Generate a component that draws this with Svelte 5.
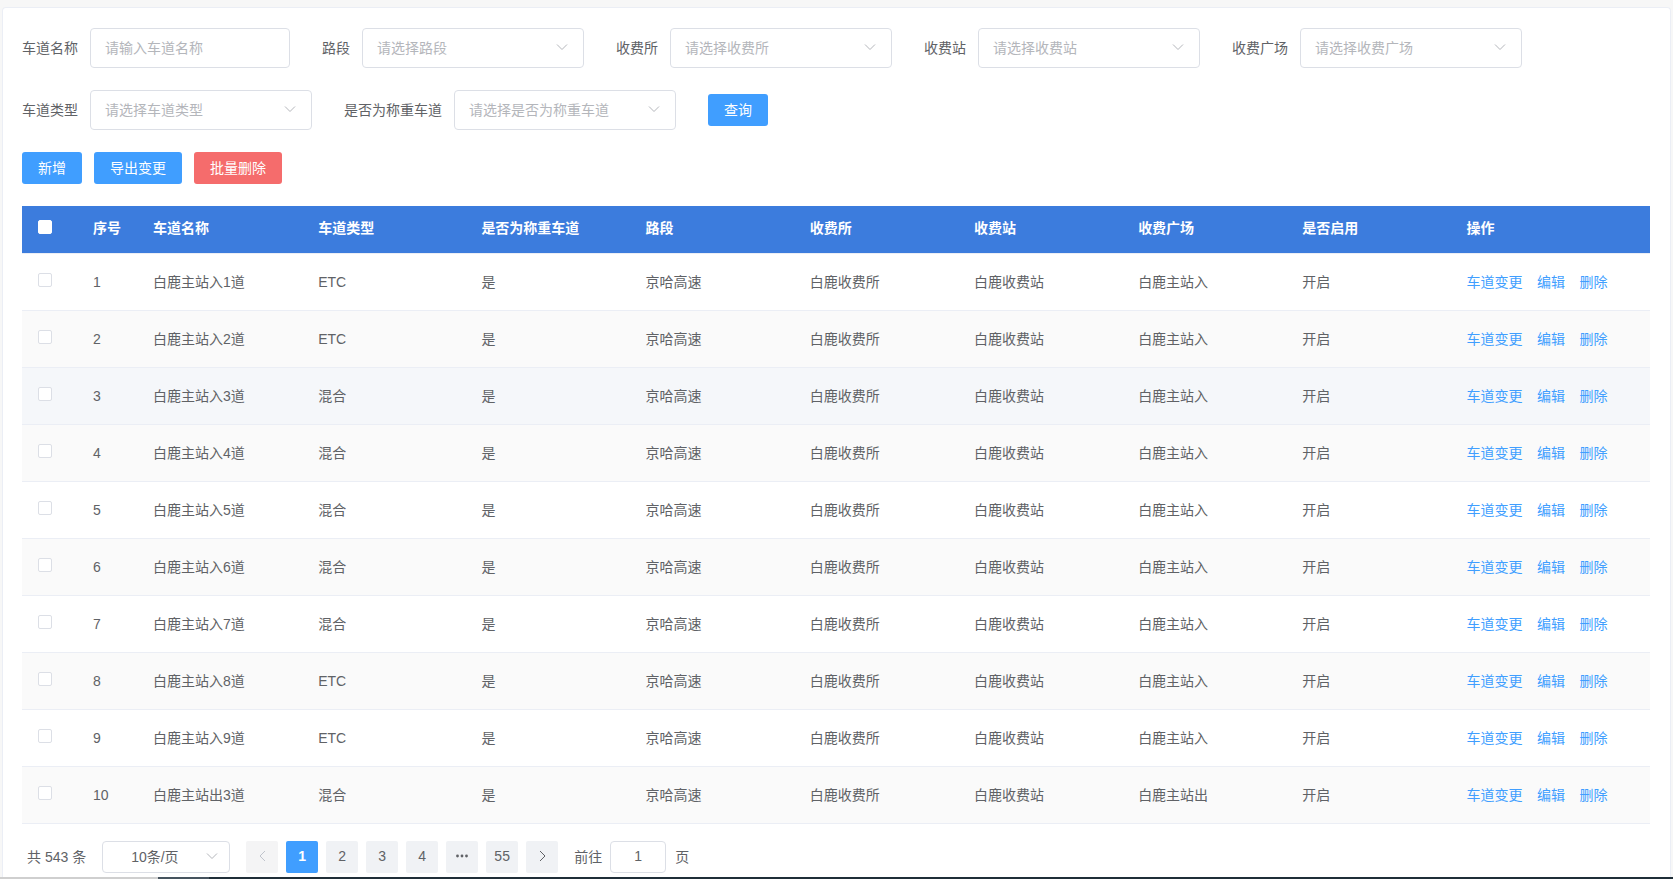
<script>
  const rows = [
    { id: 1, name: "白鹿主站入1道", type: "ETC", plaza: "白鹿主站入" },
    { id: 2, name: "白鹿主站入2道", type: "ETC", plaza: "白鹿主站入" },
    { id: 3, name: "白鹿主站入3道", type: "混合", plaza: "白鹿主站入" },
    { id: 4, name: "白鹿主站入4道", type: "混合", plaza: "白鹿主站入" },
    { id: 5, name: "白鹿主站入5道", type: "混合", plaza: "白鹿主站入" },
    { id: 6, name: "白鹿主站入6道", type: "混合", plaza: "白鹿主站入" },
    { id: 7, name: "白鹿主站入7道", type: "混合", plaza: "白鹿主站入" },
    { id: 8, name: "白鹿主站入8道", type: "ETC", plaza: "白鹿主站入" },
    { id: 9, name: "白鹿主站入9道", type: "ETC", plaza: "白鹿主站入" },
    { id: 10, name: "白鹿主站出3道", type: "混合", plaza: "白鹿主站出" }
  ];

  const firstLine = [
    { label: "路段", placeholder: "请选择路段" },
    { label: "收费所", placeholder: "请选择收费所" },
    { label: "收费站", placeholder: "请选择收费站" },
    { label: "收费广场", placeholder: "请选择收费广场" }
  ];

  const heads = ["序号", "车道名称", "车道类型", "是否为称重车道", "路段", "收费所", "收费站", "收费广场", "是否启用", "操作"];
  const pages = ["2", "3", "4"];
</script>

{#snippet arrow()}
  <svg class="arrow" width="12" height="12" viewBox="0 0 12 12"><path d="M1 3.5 L6 8.5 L11 3.5" /></svg>
{/snippet}

<div class="page">
  <div class="card">
    <div class="line">
      <div class="field">
        <span class="label">车道名称</span>
        <div class="box input">请输入车道名称</div>
      </div>
      {#each firstLine as item}
        <div class="field">
          <span class="label">{item.label}</span>
          <div class="box select">{item.placeholder}{@render arrow()}</div>
        </div>
      {/each}
    </div>

    <div class="line">
      <div class="field">
        <span class="label">车道类型</span>
        <div class="box select">请选择车道类型{@render arrow()}</div>
      </div>
      <div class="field">
        <span class="label">是否为称重车道</span>
        <div class="box select">请选择是否为称重车道{@render arrow()}</div>
      </div>
      <button class="btn primary">查询</button>
    </div>

    <div class="actions">
      <button class="btn primary">新增</button>
      <button class="btn primary">导出变更</button>
      <button class="btn danger">批量删除</button>
    </div>

    <table>
      <colgroup>
        <col class="c-check" />
        <col class="c-index" />
        <col class="c-name" />
        <col class="c-type" />
        {#each Array(6) as _}
          <col class="c-text" />
        {/each}
        <col />
      </colgroup>
      <thead>
        <tr>
          <th class="check-cell"><span class="check head"></span></th>
          {#each heads as head}
            <th>{head}</th>
          {/each}
        </tr>
      </thead>
      <tbody>
        {#each rows as row, i}
          <tr class:striped={i % 2 === 1} class:hover={i === 2}>
            <td class="check-cell"><span class="check"></span></td>
            <td class="latin">{row.id}</td>
            <td>{row.name}</td>
            <td class:latin={row.type === "ETC"}>{row.type}</td>
            <td>是</td>
            <td>京哈高速</td>
            <td>白鹿收费所</td>
            <td>白鹿收费站</td>
            <td>{row.plaza}</td>
            <td>开启</td>
            <td class="ops">
              <span class="link">车道变更</span><span class="link">编辑</span><span class="link">删除</span>
            </td>
          </tr>
        {/each}
      </tbody>
    </table>

    <div class="pager">
      <span class="total">共 543 条</span>
      <div class="box size">10条/页{@render arrow()}</div>
      <div class="pages">
        <span class="num disabled"><svg width="7" height="12" viewBox="0 0 7 12"><path d="M6 1 L1 6 L6 11" /></svg></span>
        <span class="num active">1</span>
        {#each pages as p}
          <span class="num">{p}</span>
        {/each}
        <span class="num dots"><svg width="12" height="4" viewBox="0 0 12 4"><circle cx="1.5" cy="2" r="1.4" /><circle cx="6" cy="2" r="1.4" /><circle cx="10.5" cy="2" r="1.4" /></svg></span>
        <span class="num">55</span>
        <span class="num"><svg width="7" height="12" viewBox="0 0 7 12"><path d="M1 1 L6 6 L1 11" /></svg></span>
      </div>
      <span class="goto">前往</span>
      <div class="box jump">1</div>
      <span class="unit">页</span>
    </div>
  </div>
  <div class="taskbar">
    <span class="tb-light"></span>
    <span class="tb-mid"></span>
    <span class="tb-dark"></span>
  </div>
</div>

<style>
  :global(body) {
    margin: 0;
    background: #f7f7f7;
  }

  .page {
    display: flex;
    flex-direction: column;
    height: 879px;
    overflow: hidden;
    font-family: "Liberation Sans", "Noto Sans CJK SC", sans-serif;
    font-size: 14px;
    color: #606266;
  }

  .card {
    flex: 1;
    min-height: 0;
    margin: 7px 2px 0 2px;
    padding: 20px 19px 0 19px;
    background: #fff;
    border: 1px solid #ebeef5;
    border-bottom: 0;
    border-radius: 4px 4px 0 0;
    box-sizing: border-box;
    overflow: hidden;
  }

  .line {
    display: flex;
    align-items: center;
    height: 40px;
    margin-bottom: 22px;
  }

  .field {
    display: flex;
    align-items: center;
    margin-right: 32px;
  }

  .label {
    margin-right: 12px;
    padding-bottom: 2px;
    white-space: nowrap;
  }

  .box {
    display: flex;
    align-items: center;
    box-sizing: border-box;
    height: 40px;
    padding: 0 15px 2px 14px;
    border: 1px solid #dcdfe6;
    border-radius: 4px;
    background: #fff;
    color: #b4b6bb;
  }

  .input {
    width: 200px;
  }

  .select {
    justify-content: space-between;
    width: 222px;
  }

  .arrow {
    fill: none;
    stroke: #b4b6bb;
    stroke-width: 1;
  }

  .btn {
    box-sizing: border-box;
    height: 32px;
    padding: 0 16px 2px;
    border: 0;
    border-radius: 3px;
    font: inherit;
    color: #fff;
  }

  .primary {
    background: #409eff;
  }

  .danger {
    background: #f56c6c;
  }

  .actions {
    display: flex;
    gap: 12px;
    margin-bottom: 22px;
  }

  table {
    width: 1628px;
    table-layout: fixed;
    border-collapse: separate;
    border-spacing: 0;
  }

  .c-check {
    width: 61px;
  }

  .c-index {
    width: 60px;
  }

  .c-name {
    width: 165.2px;
  }

  .c-type {
    width: 163.2px;
  }

  .c-text {
    width: 164.2px;
  }

  th {
    height: 47px;
    box-sizing: content-box;
    padding: 0 10px;
    background: #3c7cdd;
    border-bottom: 1px solid #ebeef5;
    color: #fff;
    font-weight: 700;
    text-align: left;
    line-height: 45px;
    vertical-align: top;
  }

  td {
    height: 54px;
    padding: 0 10px 2px;
    border-bottom: 1px solid #ebeef5;
  }

  td.latin {
    height: 54px;
    padding: 1px 10px;
  }

  .check-cell {
    padding-left: 16px;
  }

  .check {
    display: block;
    box-sizing: border-box;
    width: 14px;
    height: 14px;
    margin-top: -2px;
    border: 1px solid #dcdfe6;
    border-radius: 2px;
    background: #fff;
  }

  .check.head {
    margin-top: 14px;
    border-color: #fff;
  }

  .striped td {
    background: #fafafa;
  }

  .hover td {
    background: #f5f7fa;
  }

  .ops {
    white-space: nowrap;
  }

  .link {
    margin-right: 14.5px;
    color: #409eff;
  }

  .pager {
    display: flex;
    align-items: center;
    margin-top: 17px;
    padding-left: 5px;
    height: 32px;
  }

  .total {
    margin-right: 16px;
    padding-bottom: 2px;
    white-space: nowrap;
  }

  .size {
    justify-content: space-between;
    width: 128px;
    height: 32px;
    padding: 0 11px 2px 28px;
    color: #606266;
  }

  .pages {
    display: flex;
    gap: 8px;
    margin-left: 16px;
    margin-right: 16px;
  }

  .num {
    display: flex;
    align-items: center;
    justify-content: center;
    box-sizing: border-box;
    width: 32px;
    height: 32px;
    padding-bottom: 2px;
    border-radius: 2px;
    background: #f0f2f5;
  }

  .num svg {
    fill: none;
    stroke: #606266;
    stroke-width: 1;
  }

  .disabled {
    background: #f4f4f5;
  }

  .disabled svg {
    stroke: #c0c4cc;
  }

  .active {
    background: #409eff;
    color: #fff;
    font-weight: 700;
  }

  .dots svg {
    fill: #606266;
    stroke: none;
  }

  .goto {
    margin-right: 8px;
    padding-bottom: 2px;
    white-space: nowrap;
  }

  .jump {
    justify-content: center;
    width: 56px;
    height: 32px;
    padding: 0 0 2px;
    color: #606266;
  }

  .unit {
    margin-left: 9px;
    padding-bottom: 2px;
  }

  .taskbar {
    display: flex;
    flex: none;
    height: 2px;
  }

  .tb-light {
    width: 158px;
    background: #cfcfcf;
  }

  .tb-mid {
    width: 51px;
    background: #45535e;
  }

  .tb-dark {
    flex: 1;
    background: #1f2e38;
  }
</style>
